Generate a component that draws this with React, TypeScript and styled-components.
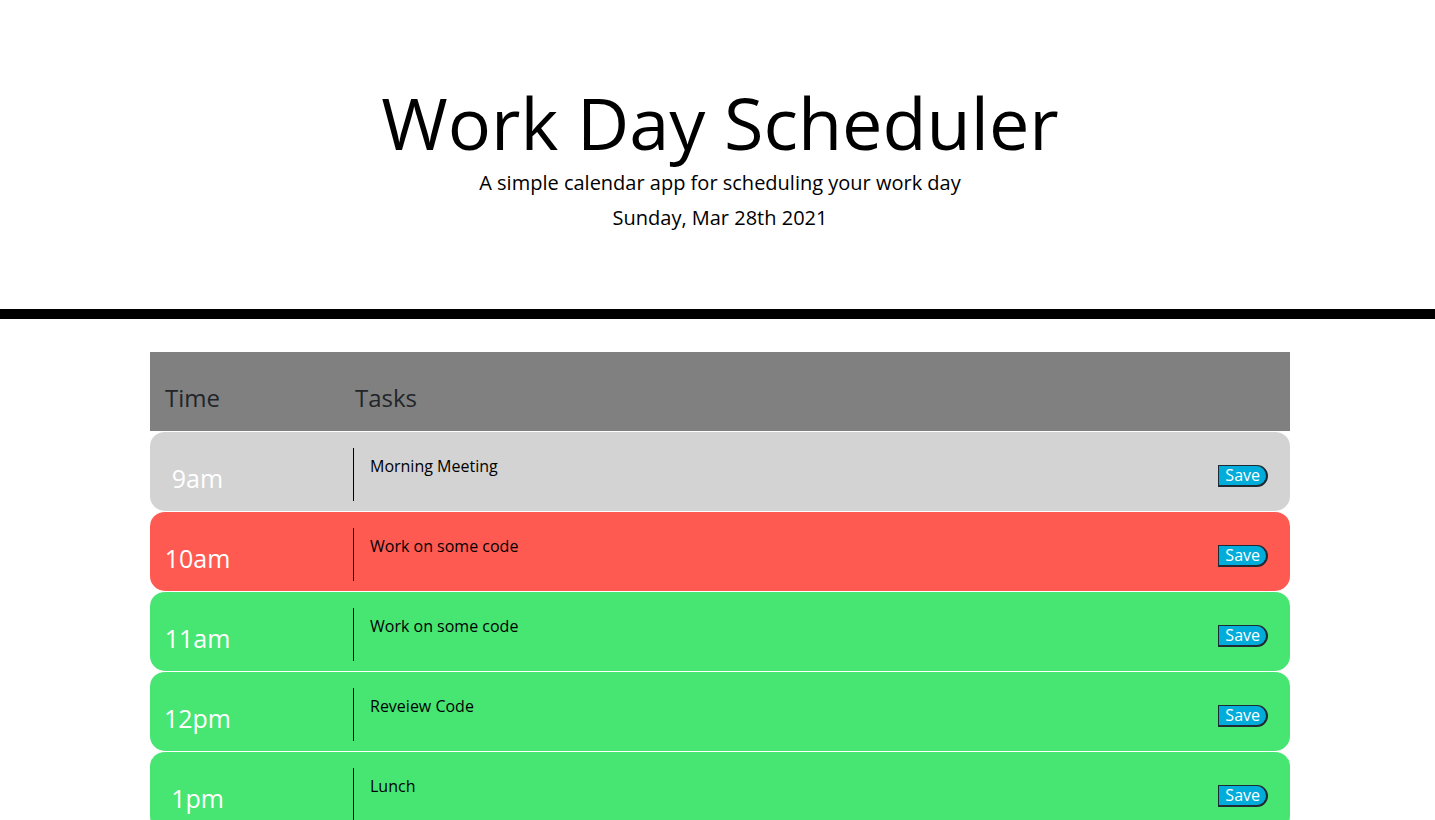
import React from 'react'
import styled, { createGlobalStyle } from 'styled-components'

const GlobalStyle = createGlobalStyle`
    * {
        box-sizing: border-box;
    }
    body {
        margin: 0;
        padding-left: 5px;
        background: #ffffff;
        font-family: "Open Sans", "Noto Sans", sans-serif;
        color: #000000;
    }
`

type Status = 'past' | 'present' | 'future'

const hours: Array<{label: string, task: string, status: Status}> = [
    {label: '9am', task: 'Morning Meeting', status: 'past'},
    {label: '10am', task: 'Work on some code', status: 'present'},
    {label: '11am', task: 'Work on some code', status: 'future'},
    {label: '12pm', task: 'Reveiew Code', status: 'future'},
    {label: '1pm', task: 'Lunch', status: 'future'},
    {label: '2pm', task: '', status: 'future'},
    {label: '3pm', task: '', status: 'future'},
    {label: '4pm', task: '', status: 'future'},
    {label: '5pm', task: '', status: 'future'},
]

const statusColors: Record<Status, string> = {
    past: '#d3d3d3',
    present: '#ff5a52',
    future: '#47e673',
}

export default function App() {
    return (
        <>
            <GlobalStyle />
            <Jumbotron>
                <Title>Work Day Scheduler</Title>
                <Lead>A simple calendar app for scheduling your work day</Lead>
                <CurrentDay>Sunday, Mar 28th 2021</CurrentDay>
            </Jumbotron>
            <Container>
                <TableHeader>
                    <HeaderCell>Time</HeaderCell>
                    <HeaderCell>Tasks</HeaderCell>
                </TableHeader>
                {hours.map(hour => (
                    <TimeBlock key={hour.label} status={hour.status}>
                        <Hour>{hour.label}</Hour>
                        <Spacer />
                        <TaskInput defaultValue={hour.task} />
                        <SaveButton>Save</SaveButton>
                    </TimeBlock>
                ))}
            </Container>
        </>
    )
}

const Jumbotron = styled.header`
    display: flex;
    flex-direction: column;
    align-items: center;
    margin-left: -5px;
    padding: 79px 32px 76px 37px;
    border-bottom: 10px solid #000000;
    text-align: center;
`

const Title = styled.h1`
    margin: 0;
    font-size: 72px;
    font-weight: 400;
    line-height: 1.2;
`

const Lead = styled.p`
    margin: 3px 0 0;
    font-size: 20px;
    line-height: 1.5;
`

const CurrentDay = styled.p`
    margin: 5px 0 0;
    font-size: 20px;
    line-height: 1.5;
`

const Container = styled.main`
    width: 1140px;
    margin: 33px auto 0;
`

const TableHeader = styled.div`
    display: grid;
    grid-template-columns: 190px 1fr;
    align-items: end;
    height: 79px;
    padding-bottom: 17px;
    background: #808080;
`

const HeaderCell = styled.div`
    padding-left: 15px;
    font-size: 24px;
    color: #212529;
`

const TimeBlock = styled.div<{status: Status}>`
    display: grid;
    grid-template-columns: 95px 108px 1fr auto;
    height: 80px;
    border-top: 1px solid #ffffff;
    border-radius: 15px;
    background: ${({status}) => statusColors[status]};
`

const Hour = styled.div`
    align-self: end;
    padding-bottom: 16px;
    text-align: center;
    font-size: 25px;
    color: #ffffff;
`

const Spacer = styled.div``

const TaskInput = styled.textarea`
    margin: 16px 0 10px;
    padding: 7px 16px;
    border: none;
    border-left: 1px solid #000000;
    background: transparent;
    resize: none;
    font-family: "Open Sans", "Noto Sans", sans-serif;
    font-size: 16px;
    color: #000000;
    outline: none;
`

const SaveButton = styled.button`
    align-self: center;
    height: 22px;
    margin: 8px 22px 0 16px;
    padding: 0 6px;
    border: 2px solid #1f2a33;
    border-left-width: 1px;
    border-top-width: 1px;
    border-radius: 0 11px 11px 0;
    background: #00acd9;
    font-family: "Open Sans", "Noto Sans", sans-serif;
    font-size: 16px;
    line-height: 18px;
    color: #ffffff;
`
